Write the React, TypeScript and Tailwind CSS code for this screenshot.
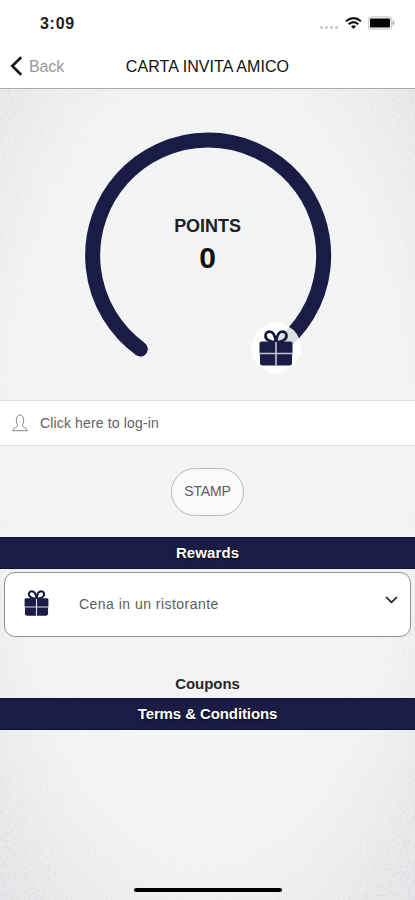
import type { ReactNode } from 'react';

interface GiftIconProps {
  className: string;
  gap: string;
}

// Gift box with a bow, the ribbon is drawn in the gap color
function GiftIcon({ className, gap }: GiftIconProps) {
  return (
    <svg viewBox="0 0 34 36" className={className} fill="none">
      <path
        d="M17 12C13 12 6.5 10.5 6.5 6C6.5 3.2 8.5 1.7 10.7 1.7C14.2 1.7 16.2 6.2 17 12ZM17 12C21 12 27.5 10.5 27.5 6C27.5 3.2 25.5 1.7 23.3 1.7C19.8 1.7 17.8 6.2 17 12Z"
        stroke="#17183f"
        strokeWidth="2.8"
      />
      <rect x="0.5" y="11.5" width="33" height="12.5" rx="2" fill="#1b1c46" />
      <path d="M1 23H33V33Q33 35.5 30.5 35.5H3.5Q1 35.5 1 33Z" fill="#1b1c46" />
      <path d="M17 12V35.5M0 23.5H34" stroke={gap} strokeWidth="1.6" />
    </svg>
  );
}

function StatusBar() {
  return (
    <div className="flex h-[46px] items-center justify-between pl-[40px] pr-[20px]">
      <span className="pt-px text-[16px] font-semibold tracking-[0.7px] text-[#222]">3:09</span>
      <div className="flex items-center">
        <div className="mt-2 mr-[7px] flex gap-[2px]">
          <span className="size-[3px] rounded-full bg-[#c4c4c4]" />
          <span className="size-[3px] rounded-full bg-[#c4c4c4]" />
          <span className="size-[3px] rounded-full bg-[#c4c4c4]" />
          <span className="size-[3px] rounded-full bg-[#c4c4c4]" />
        </div>
        <svg viewBox="0 0 17 13" className="mr-[6px] h-[13px] w-[17px]" fill="none" stroke="#111">
          <path d="M1 4.3Q8.5-2 16 4.3" strokeWidth="2.1" />
          <path d="M3.6 7.3Q8.5 2.9 13.4 7.3" strokeWidth="2" />
          <path d="M6 9.2Q8.5 7.2 11 9.2L8.5 12Z" fill="#111" stroke="none" />
        </svg>
        <svg viewBox="0 0 27 14" className="h-[14px] w-[27px]">
          <rect x="0.6" y="0.9" width="23" height="12.2" rx="3" fill="#fff" stroke="#ccc" strokeWidth="1.4" />
          <rect x="2" y="2.5" width="20" height="9" rx="1" fill="#050505" />
          <path d="M24.7 4.6Q26.6 5.6 26.6 7Q26.6 8.4 24.7 9.4Z" fill="#aaa" />
        </svg>
      </div>
    </div>
  );
}

function NavBar() {
  return (
    <div className="grid h-[43px] grid-cols-[1fr_auto_1fr] items-center border-b border-[#aaa]">
      <button className="flex items-center pl-[10px] text-left">
        <svg viewBox="0 0 13 20" className="-mt-[2px] h-[20px] w-[13px]" fill="none">
          <path d="M11.2 1.2L2.2 10L11.2 18.8" stroke="#161616" strokeWidth="2.6" />
        </svg>
        <span className="ml-[6px] text-[16px] tracking-[-0.1px] text-[#9a9a9a]">Back</span>
      </button>
      <h1 className="text-[16px] tracking-[0.08px] text-[#111]">CARTA INVITA AMICO</h1>
      <span />
    </div>
  );
}

// Paper grain, stronger towards the corners of the screen
function PaperTexture() {
  return (
    <svg className="pointer-events-none absolute inset-0 h-full w-full" preserveAspectRatio="none">
      <defs>
        <filter id="grain" x="0" y="0" width="100%" height="100%">
          <feTurbulence type="fractalNoise" baseFrequency="0.35" numOctaves="3" seed="4" />
          <feColorMatrix values="0 0 0 0 0.6  0 0 0 0 0.62  0 0 0 0 0.65  1.7 0 0 0 -0.65" />
        </filter>
        <radialGradient id="fade" cx="50%" cy="46%" r="74%">
          <stop offset="0.5" stopColor="#fff" stopOpacity="0.04" />
          <stop offset="0.8" stopColor="#fff" stopOpacity="0.2" />
          <stop offset="1" stopColor="#fff" stopOpacity="0.7" />
        </radialGradient>
        <mask id="edges">
          <rect width="100%" height="100%" fill="url(#fade)" />
        </mask>
      </defs>
      <g mask="url(#edges)">
        <rect width="100%" height="100%" filter="url(#grain)" />
      </g>
    </svg>
  );
}

function PointsGauge() {
  return (
    <section className="relative flex h-[311px] flex-col items-center pt-[126px]">
      <svg viewBox="0 0 415 311" className="absolute inset-0 h-[311px] w-[415px]" fill="none">
        <path d="M140.3 260A115.5 115.5 0 1 1 276 260" stroke="#1b1c46" strokeWidth="15" strokeLinecap="round" />
        <circle cx="276" cy="259" r="25" fill="#fff" fillOpacity="0.86" />
      </svg>
      <h2 className="relative text-[18px] leading-[22px] font-bold tracking-[-0.05px] text-[#202020]">POINTS</h2>
      <p className="relative mt-[3px] text-[30px] leading-[36px] font-bold text-[#111]">0</p>
      <div className="absolute top-[241px] left-[259px]">
        <GiftIcon className="h-[36px] w-[34px]" gap="#c4c5d6" />
      </div>
    </section>
  );
}

function SectionBar({ children }: { children: ReactNode }) {
  return (
    <div className="flex h-[32px] items-center justify-center border-y border-[#111237] bg-[#1b1c46] text-[15px] font-bold text-white [text-shadow:0_1px_2px_#000]">
      {children}
    </div>
  );
}

export default function App() {
  return (
    <div className="flex h-[900px] w-[415px] flex-col overflow-hidden bg-white font-['Liberation_Sans',Arial,sans-serif]">
      <StatusBar />
      <NavBar />

      <main className="relative flex-1 bg-[radial-gradient(ellipse_74%_74%_at_50%_46%,#f3f4f4_65%,#e6e7e9_100%)]">
        <PaperTexture />
        <div className="relative flex h-full flex-col">
          <PointsGauge />

          <button className="flex h-[46px] items-center border-y border-[#dedede] bg-white pl-[12px]">
            <svg viewBox="0 0 16 18" className="h-[18px] w-[16px]" fill="none" stroke="#858585">
              <path d="M5.8 11.2C3.6 9 3.5 1 8 1C12.5 1 12.4 9 10.2 11.2C10.2 13.8 14.8 13 15.2 16.7H0.8C1.2 13 5.8 13.8 5.8 11.2Z" />
            </svg>
            <span className="ml-[12px] text-[14px] tracking-[0.15px] text-[#626262]">Click here to log-in</span>
          </button>

          <div className="flex h-[91px] items-center justify-center">
            <button className="h-[48px] w-[73px] rounded-full border border-[#bbb] bg-[#fafafa] text-[14px] tracking-[-0.1px] text-[#5d5d5d]">
              STAMP
            </button>
          </div>

          <SectionBar>
            <span className="tracking-[0.1px]">Rewards</span>
          </SectionBar>
          <div className="mx-[4px] mt-[3px] flex h-[65px] items-center rounded-[11px] border border-[#929292] bg-white pr-[12px] pl-[19px]">
            <GiftIcon className="-mt-[3px] h-[26px] w-[25px]" gap="#dcdce8" />
            <span className="ml-[30px] flex-1 text-[14px] tracking-[0.47px] text-[#5d5d5d]">Cena in un ristorante</span>
            <svg viewBox="0 0 13 8" className="-mt-[10px] h-[8px] w-[13px]" fill="none">
              <path d="M1 1L6.5 6.4L12 1" stroke="#1c1c1c" strokeWidth="1.7" />
            </svg>
          </div>

          <h2 className="mt-[35px] mb-[2px] flex h-[24px] items-center justify-center text-[15px] font-bold tracking-[-0.05px] text-[#282828]">
            Coupons
          </h2>
          <SectionBar>
            <span className="tracking-[-0.1px]">Terms &amp; Conditions</span>
          </SectionBar>

          <div className="mx-auto mt-auto mb-[8px] h-[4px] w-[148px] rounded-full bg-black" />
        </div>
      </main>
    </div>
  );
}
